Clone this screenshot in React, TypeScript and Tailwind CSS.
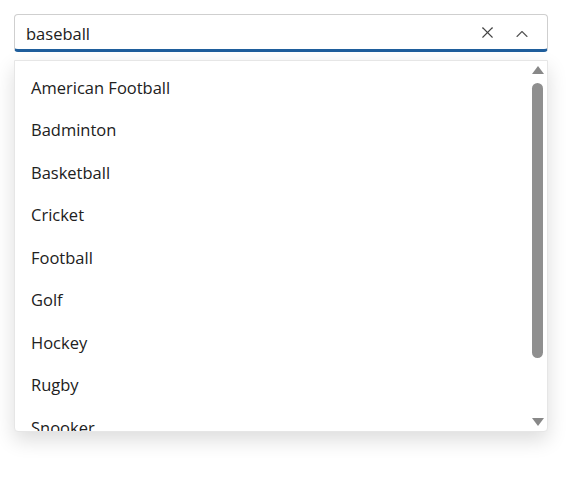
import { X, ChevronUp } from "lucide-react";

const sports = [
	"American Football",
	"Badminton",
	"Basketball",
	"Cricket",
	"Football",
	"Golf",
	"Hockey",
	"Rugby",
	"Snooker",
];

const App = () => {
	return (
		<div className="w-[577px] h-[497px] bg-white pt-[14px] px-[14px] font-['Open_Sans',sans-serif] text-[#212121]">
			<div className="w-[534px]">
				{/* Input */}
				<div className="h-[38px] flex items-center rounded-[4px] border border-[#cfcfcf] border-b-[3px] border-b-[#1f5e9c] pl-[11px] pr-[15px]">
					<span className="flex-1 text-[16.5px] leading-none pt-[4px]">baseball</span>
					<X size={19} strokeWidth={1.4} className="text-[#444] mr-[15px] mt-[1px]" />
					<ChevronUp size={20} strokeWidth={1.3} className="text-[#555] mt-[3px]" />
				</div>

				{/* Popup */}
				<div className="mt-[8px] h-[372px] flex rounded-b-[4px] bg-white border border-[#e6e6e6] shadow-[0_8px_20px_rgba(0,0,0,0.14)] overflow-hidden">
					<div className="flex-1 overflow-hidden pt-[6px]">
						{sports.map((s) => (
							<div key={s} className="h-[42.5px] shrink-0 flex items-center pl-[16px] text-[16.5px]">
								{s}
							</div>
						))}
					</div>
					{/* Scrollbar */}
					<div className="w-[17px] flex flex-col items-center pt-[5px] pb-[5px] pr-[2px]">
						<svg width="12" height="8" viewBox="0 0 12 8" className="text-[#888]">
							<path d="M6 0 L12 8 L0 8 Z" fill="currentColor" />
						</svg>
						<div className="mt-[9px] w-[11px] h-[275px] rounded-full bg-[#8f8f8f]" />
						<div className="flex-1" />
						<svg width="12" height="8" viewBox="0 0 12 8" className="text-[#888]">
							<path d="M0 0 L12 0 L6 8 Z" fill="currentColor" />
						</svg>
					</div>
				</div>
			</div>
		</div>
	);
};

export default App;
